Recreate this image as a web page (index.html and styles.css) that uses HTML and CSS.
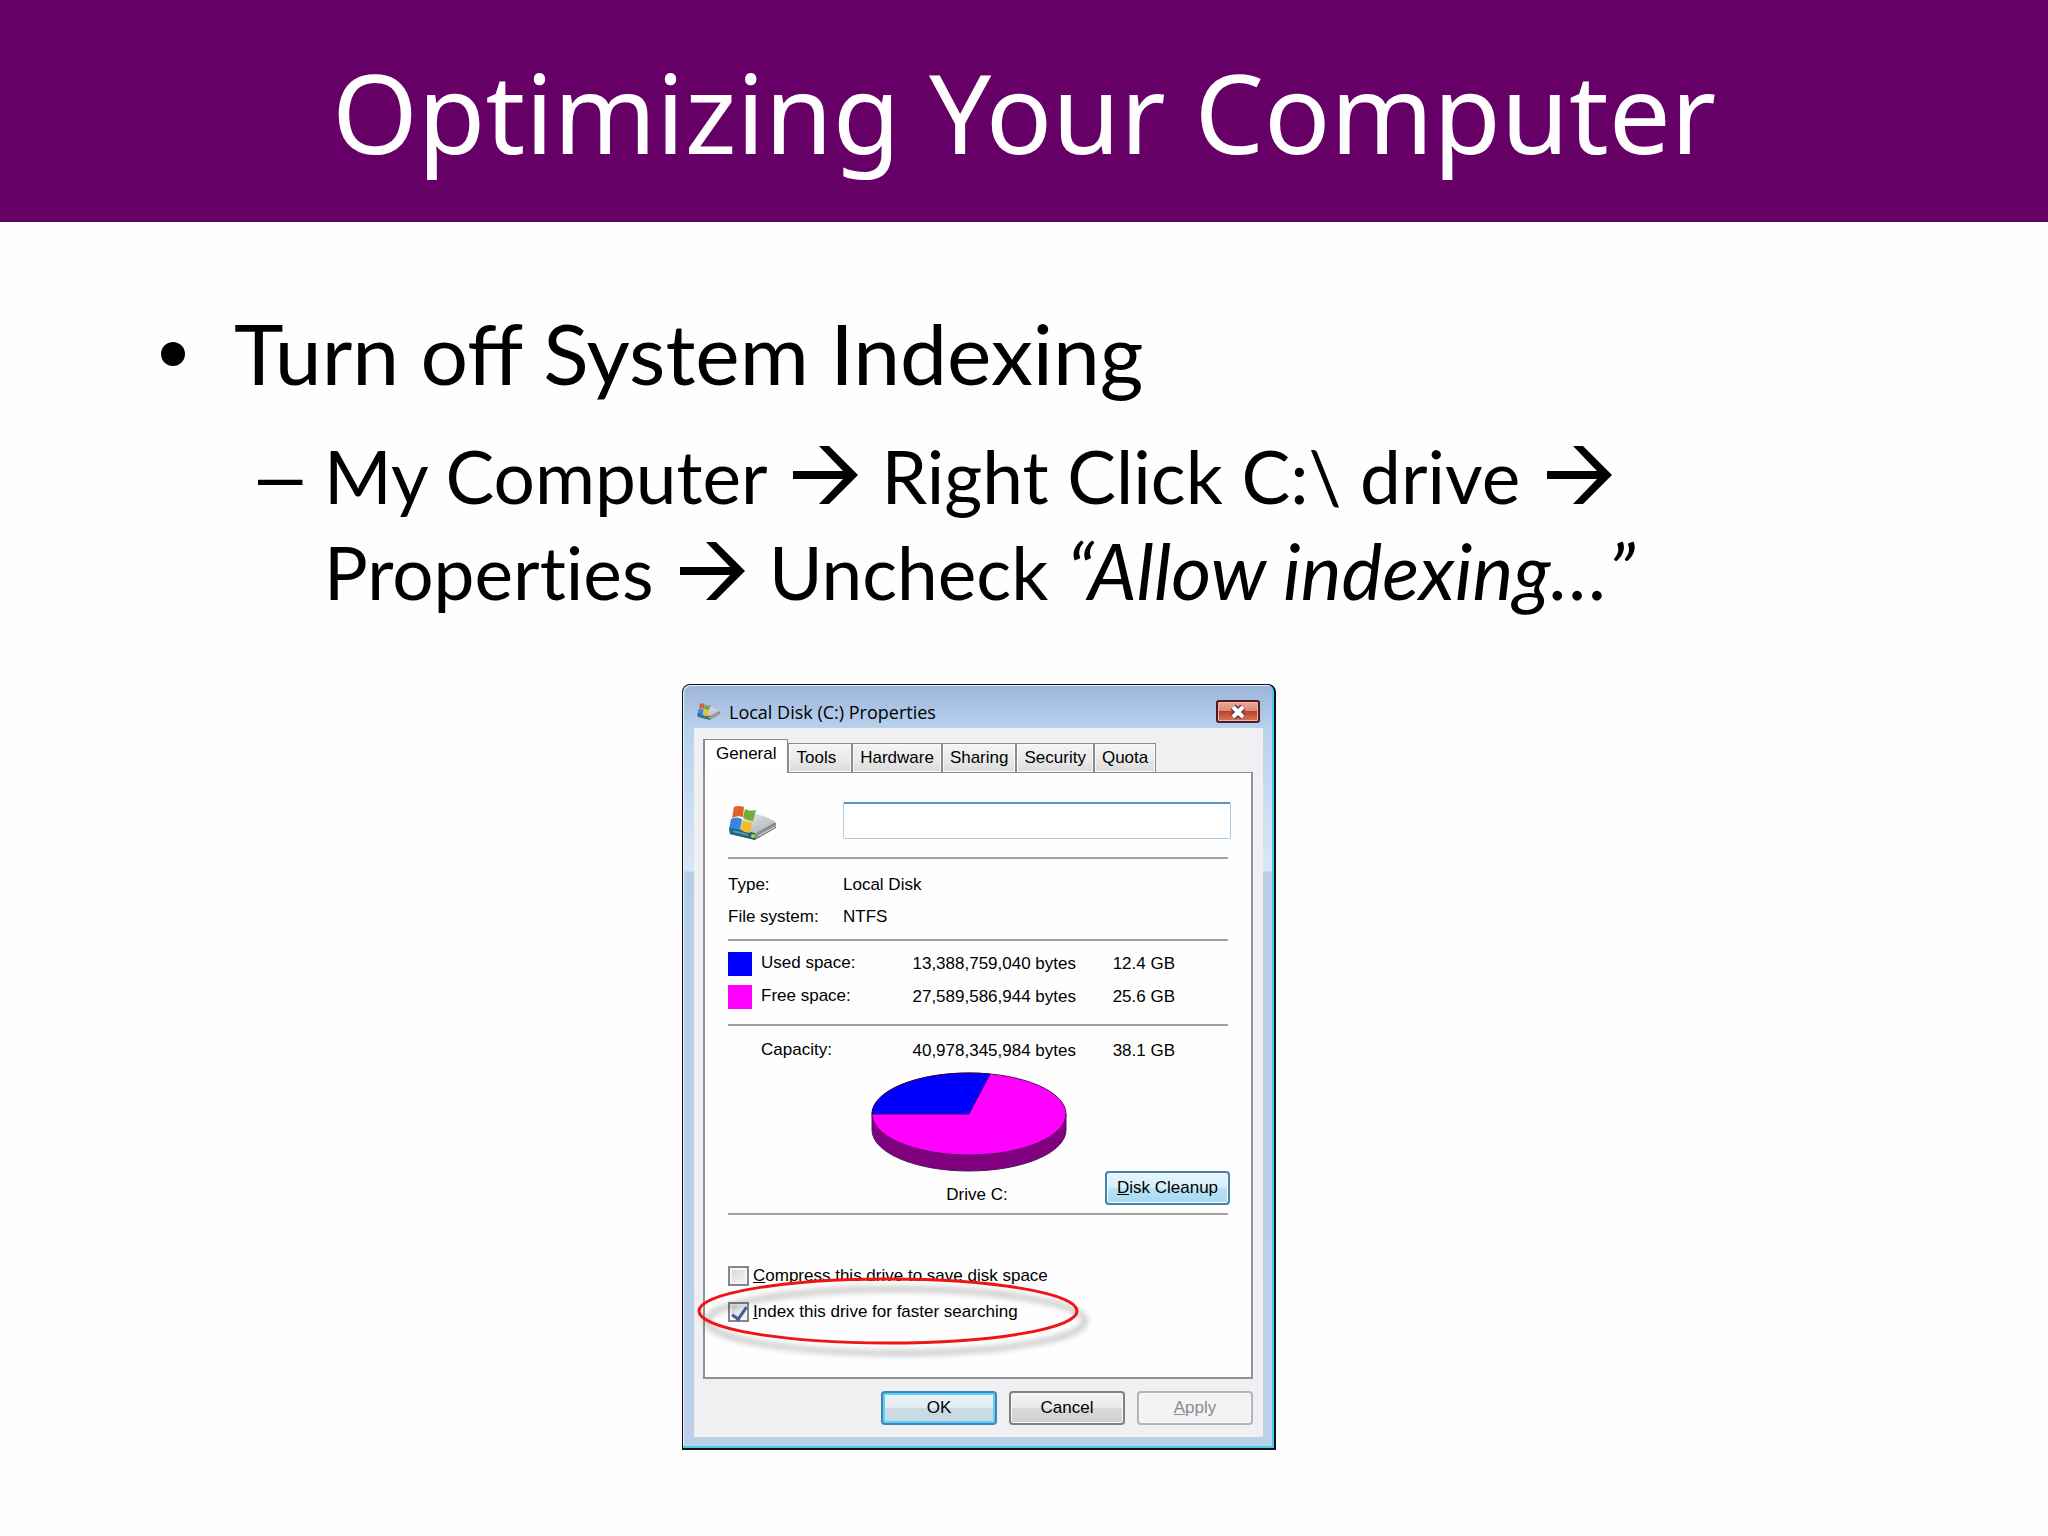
FILE: index.html
```html
<!DOCTYPE html>
<html lang="en">
<head>
<meta charset="utf-8">
<meta name="viewport" content="width=device-width, initial-scale=1">
<title>Optimizing Your Computer</title>
<link rel="stylesheet" href="styles.css">
</head>
<body>
<svg class="defs" aria-hidden="true">
  <defs>
    <linearGradient id="metal" x1="0" y1="0" x2="1" y2="1"><stop offset="0" stop-color="#f2f2f2"/><stop offset="1" stop-color="#a9abad"/></linearGradient>
    <symbol id="arrow" viewBox="0 0 65 58"><path d="M0 25H50L26 0H36L65 29L36 58H26L50 33H0Z"/></symbol>
    <symbol id="drive" viewBox="0 0 50 36">
      <path d="M1 22L24 10L48 17V22L27 34L2 28Z" fill="#6d7276"/>
      <path d="M2 21L25 8Q34 8 48 16L27 28Z" fill="url(#metal)"/>
      <path d="M27 28L48 17V21L27 33Z" fill="#8d9194"/>
      <path d="M30 30L47 21" stroke="#dcdedf" fill="none"/>
      <path d="M1 21L27 27V34L2 28Z" fill="#22627f"/>
      <path d="M5 25L20 29" stroke="#4f9ab0" stroke-width="2" fill="none"/>
      <circle cx="25" cy="30" r="2" fill="#9ddf28"/>
      <path d="M6 1Q10 -1 16 1L15 11Q9 9 4 12Z" fill="#e4602a"/>
      <path d="M17 3Q22 6 28 4L25 15Q20 15 15 12Z" fill="#6fae3a"/>
      <path d="M3 13Q8 10 14 13L12 24Q7 21 1 23Z" fill="#3a86dc"/>
      <path d="M15 14Q19 17 24 16L22 27Q17 27 13 24Z" fill="#f6bb26"/>
    </symbol>
  </defs>
</svg>

<header class="slide-header"><h1>Optimizing Your Computer</h1></header>

<main class="slide-body">
  <ul class="points">
    <li>Turn off System Indexing
      <ul class="steps">
        <li>My Computer <svg class="arrow" role="img" aria-label="then"><use href="#arrow"/></svg> Right Click C:\ drive <svg class="arrow" role="img" aria-label="then"><use href="#arrow"/></svg> Properties <svg class="arrow" role="img" aria-label="then"><use href="#arrow"/></svg> Uncheck <em>“Allow indexing…”</em></li>
      </ul>
    </li>
  </ul>

  <section class="dialog" aria-labelledby="dialog-title">
    <div class="titlebar">
      <svg class="titlebar-icon" aria-hidden="true"><use href="#drive"/></svg>
      <h2 id="dialog-title">Local Disk (C:) Properties</h2>
      <button class="close" type="button" aria-label="Close">
        <svg viewBox="0 0 20 16" aria-hidden="true"><path d="M5 3L15 13M15 3L5 13" stroke="#5d3a44" stroke-width="7"/><path d="M5 3L15 13M15 3L5 13" stroke="#fff" stroke-width="4"/></svg>
      </button>
    </div>
    <form class="client">
      <div class="tabs" role="tablist">
        <button class="tab active" type="button" role="tab" aria-selected="true">General</button>
        <button class="tab" type="button" role="tab">Tools</button>
        <button class="tab" type="button" role="tab">Hardware</button>
        <button class="tab" type="button" role="tab">Sharing</button>
        <button class="tab" type="button" role="tab">Security</button>
        <button class="tab" type="button" role="tab">Quota</button>
      </div>
      <div class="panel" role="tabpanel">
        <div class="name-row">
          <svg class="drive-icon" aria-hidden="true"><use href="#drive"/></svg>
          <input class="name" type="text" aria-label="Drive name">
        </div>
        <dl class="facts">
          <dt>Type:</dt><dd>Local Disk</dd>
          <dt>File system:</dt><dd>NTFS</dd>
        </dl>
        <table class="usage">
          <tbody>
            <tr><th scope="row"><span class="swatch used"></span>Used space:</th><td>13,388,759,040 bytes</td><td>12.4 GB</td></tr>
            <tr><th scope="row"><span class="swatch free"></span>Free space:</th><td>27,589,586,944 bytes</td><td>25.6 GB</td></tr>
          </tbody>
          <tfoot>
            <tr><th scope="row"><span class="swatch"></span>Capacity:</th><td>40,978,345,984 bytes</td><td>38.1 GB</td></tr>
          </tfoot>
        </table>
        <div class="chart-row">
          <figure class="chart">
            <svg viewBox="0 0 196 100" role="img" aria-label="Used and free space">
              <path d="M1 42V58A97 41 0 0 0 195 58V42Z" fill="#800080" stroke="#4a1a5a"/>
              <ellipse cx="98" cy="42" rx="97" ry="41" fill="#f0f" stroke="#5a1060"/>
              <path d="M98 42H1A97 41 0 0 1 119 2Z" fill="#00f" stroke="#300060"/>
            </svg>
            <figcaption>Drive C:</figcaption>
          </figure>
          <button class="btn cleanup" type="button"><span><u>D</u>isk Cleanup</span></button>
        </div>
        <div class="options">
          <label><input type="checkbox"><span><u>C</u>ompress this drive to save disk space</span></label>
          <label><input type="checkbox" checked><span><u>I</u>ndex this drive for faster searching</span></label>
          <svg class="callout" viewBox="0 0 396 84" aria-hidden="true"><ellipse cx="192" cy="36" rx="189" ry="32"/></svg>
        </div>
      </div>
      <div class="actions">
        <button class="btn default" type="button">OK</button>
        <button class="btn" type="button">Cancel</button>
        <button class="btn" type="button" disabled><span><u>A</u>pply</span></button>
      </div>
    </form>
  </section>
</main>
</body>
</html>
```
FILE: styles.css
```css
* { box-sizing: border-box; }

body {
  margin: 0;
  background: #fefefe;
  color: #000;
  font-family: Lato, "Liberation Sans", sans-serif;
}

.defs { position: absolute; width: 0; height: 0; }

/* Slide */
.slide-header {
  display: flex;
  justify-content: center;
  padding: 36px 24px;
  background: #660066;
  color: #fff;
}

.slide-header h1 {
  margin: 0;
  font: 400 110px/150px "Noto Sans", "Open Sans", sans-serif;
}

.slide-body { padding: 76px 160px 80px; }

.points, .steps { margin: 0; padding: 0; list-style: none; }
.points > li { position: relative; padding-left: 74px; font-size: 84px; line-height: 110px; }
.points > li::before {
  content: "";
  position: absolute;
  left: 1px;
  top: 44px;
  width: 24px;
  height: 24px;
  border-radius: 50%;
  background: #000;
}
.steps { margin-top: 20px; padding-left: 24px; }
.steps > li { position: relative; padding-left: 66px; font-size: 73px; line-height: 96px; font-variant-ligatures: none; }
.steps > li::before { content: "–"; position: absolute; left: 0; font-family: "Liberation Sans", Arial, sans-serif; font-size: 80px; }
.steps em { font-size: 77px; line-height: 1; }
.arrow { width: 65px; height: 58px; margin: 0 5px 0 8px; }

/* Properties window */
.dialog {
  width: 594px;
  max-width: 100%;
  margin: 64px 0 0 522px;
  padding: 0 11px 11px;
  border: 1px solid #101418;
  border-right-width: 2px;
  border-bottom-width: 2px;
  border-radius: 8px 8px 0 0;
  background: linear-gradient(#9db4da, #b9d3ee 46px, #d8e6f5 180px, #d8e6f5 186px, #b7cfe6 187px, #bcd0ea);
  box-shadow: inset -2px -2px #4ccbe8, inset 1px 1px #e6f1fb;
  font: 17px/20px "Liberation Sans", Arial, sans-serif;
}

.dialog button, .dialog input { font: inherit; color: inherit; }

.titlebar { display: flex; align-items: center; gap: 8px; height: 43px; padding: 10px 3px 0; }
.titlebar h2 { flex: 1; margin: 0; font: 400 18px/24px "Open Sans", "Noto Sans", sans-serif; }
.titlebar-icon { width: 24px; height: 18px; }

.close {
  display: grid;
  place-items: center;
  width: 44px;
  height: 23px;
  padding: 0;
  border: 2px solid #4f1a28;
  border-radius: 3px;
  background: linear-gradient(#eba99a, #dc8b78 45%, #bd4327 50%, #d9755a);
  box-shadow: inset 0 0 0 1px #f2b5a6;
}
.close svg { width: 20px; height: 16px; }

.client { padding: 11px 10px 12px 9px; background: #f0eff1; }

.tabs { display: flex; align-items: flex-end; }
.tab {
  height: 30px;
  margin-bottom: -1px;
  padding: 0 7px;
  border: 1px solid #8b8c90;
  border-left-width: 2px;
  background: linear-gradient(#f4f4f4, #ebebeb 50%, #dadada);
  box-shadow: inset 0 0 0 1px #fafafa;
}
.tab + .tab { margin-left: -1px; }
.tab:nth-child(2) { padding-right: 15px; }
.dialog .tab.active {
  z-index: 1;
  height: 34px;
  padding: 0 11px 6px;
  border-bottom: 0;
  background: #fff;
}

.panel {
  min-height: 607px;
  padding: 29px 23px 30px;
  border: 2px solid #919297;
  border-top-width: 1px;
  background: #fefefe;
}

.name-row { display: flex; justify-content: space-between; align-items: flex-start; margin-right: -3px; }
.drive-icon { width: 50px; height: 36px; margin-top: 4px; }
.name {
  width: 388px;
  height: 37px;
  padding: 0 8px;
  border: 1px solid #a9cbe3;
  border-top: 2px solid #5794bf;
  border-radius: 2px;
  background: #fff;
}

.facts {
  display: grid;
  grid-template-columns: 115px 1fr;
  row-gap: 12px;
  margin: 15px 0 0;
  padding: 16px 0 12px;
  border-top: 2px solid #a0a0a0;
  border-bottom: 2px solid #a0a0a0;
}
.facts dd { margin: 0; }

.usage { width: 100%; border-collapse: collapse; table-layout: fixed; margin-top: 6px; }
.usage th, .usage td { height: 33px; padding: 0; font-weight: 400; text-align: right; }
.usage th { width: 160px; text-align: left; }
.usage td:nth-child(2) { width: 188px; }
.usage td:last-child { padding-right: 53px; }
.usage tbody tr:last-child > * { height: 45px; padding-bottom: 11px; }
.usage tfoot > tr > * { height: 42px; padding-top: 8px; border-top: 2px solid #a0a0a0; }
.swatch { display: inline-block; width: 24px; height: 24px; margin-right: 9px; vertical-align: middle; }
.used { background: #00f; }
.free { background: #f0f; }

.chart-row {
  display: flex;
  justify-content: flex-end;
  align-items: flex-end;
  gap: 38px;
  margin-top: 5px;
  padding-bottom: 8px;
  border-bottom: 2px solid #a0a0a0;
}
.chart { margin: 0; text-align: center; }
.chart svg { display: block; width: 196px; height: 100px; margin-bottom: 13px; }
.chart figcaption { padding-left: 16px; }

.btn {
  width: 116px;
  height: 34px;
  padding: 0;
  border: 2px solid #7b8381;
  border-radius: 4px;
  background: linear-gradient(#f3f3f3, #ebebeb 48%, #d9d9d9 52%, #cfcfcf);
  box-shadow: inset 0 0 0 1px #fafafa;
}
.btn.default {
  border-color: #3a86bb;
  background: linear-gradient(#eaf3f7, #e2edf2 48%, #cbd9e2 52%, #c8dbe6);
  box-shadow: inset 0 0 0 2px #5fd0f6;
}
.btn.cleanup {
  width: 125px;
  margin-right: -2px;
  border-color: #4481ad;
  background: linear-gradient(#e6f5fc, #d6effb 48%, #b9e2f6 52%, #a6d9f2);
}
.dialog .btn:disabled { border-color: #b2b4b8; background: #f3f2f4; color: #8a8b8f; }

.options { position: relative; display: grid; gap: 16px; padding-top: 51px; }
.options label { display: flex; align-items: center; gap: 4px; }
.options input {
  position: relative;
  appearance: none;
  width: 21px;
  height: 20px;
  margin: 0;
  border: 2px solid #84878a;
  background: linear-gradient(135deg, #d0d3d6, #f8f8f8);
  box-shadow: inset 0 0 0 2px #f4f4f4;
}
.options input:checked::after {
  content: "";
  position: absolute;
  left: 5px;
  top: 0;
  width: 6px;
  height: 13px;
  border: solid #45599c;
  border-width: 0 3px 3px 0;
  transform: rotate(35deg);
}

/* Ring around the indexing option */
.callout { position: absolute; left: -32px; bottom: -37px; width: 396px; height: 84px; overflow: visible; pointer-events: none; }
.callout ellipse { fill: none; stroke: #f01414; stroke-width: 3px; filter: drop-shadow(8px 10px 3px rgba(0, 0, 0, 0.4)); }

.actions { display: flex; justify-content: flex-end; gap: 12px; padding-top: 12px; }
```
